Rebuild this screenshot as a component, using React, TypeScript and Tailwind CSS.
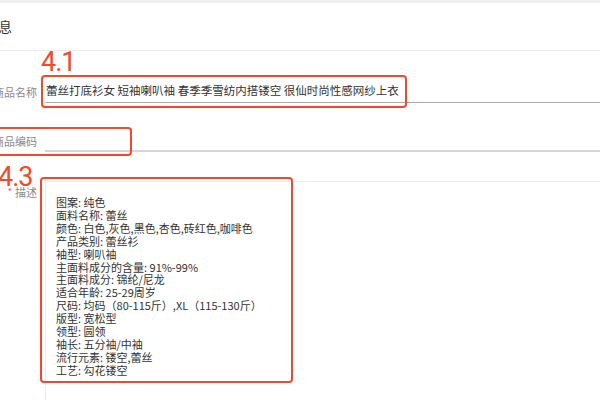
const descLines = [
  '图案: 纯色',
  '面料名称: 蕾丝',
  '颜色: 白色,灰色,黑色,杏色,砖红色,咖啡色',
  '产品类别: 蕾丝衫',
  '袖型: 喇叭袖',
  '主面料成分的含量: 91%-99%',
  '主面料成分: 锦纶/尼龙',
  '适合年龄: 25-29周岁',
  '尺码: 均码（80-115斤）,XL（115-130斤）',
  '版型: 宽松型',
  '领型: 圆领',
  '袖长: 五分袖/中袖',
  '流行元素: 镂空,蕾丝',
  '工艺: 勾花镂空',
];

function Label({ children, required }: { children: React.ReactNode; required?: boolean }) {
  return (
    <div className="w-[45px] shrink-0 flex justify-end pr-[8px]">
      <span className="shrink-0 whitespace-nowrap text-[11px] leading-[16px] text-[#8a8a8a]">
        {required && <span className="text-[#f0503c] text-[9px] align-top mr-[3px]">*</span>}
        {children}
      </span>
    </div>
  );
}

export default function App() {
  return (
    <div
      className="relative w-[600px] h-[400px] overflow-hidden bg-white"
      style={{ fontFamily: '"Noto Sans CJK SC", "Noto Sans", sans-serif' }}
    >
      <div className="h-[3px] bg-[#efefef]" />
      <div className="h-[48px] flex items-center border-b border-[#ececec]">
        <span className="ml-[-15px] text-[13.5px] text-[#333]">信息</span>
      </div>

      {/* 商品名称 */}
      <div className="flex items-end mt-[26px]">
        <div className="pb-[3px]">
          <Label>商品名称</Label>
        </div>
        <div className="flex-1 h-[26px] flex items-end pb-[3px] border-b border-[#aaa] pl-[1px]">
          <span className="whitespace-nowrap text-[11.5px] leading-[17px] text-[#333]">
            蕾丝打底衫女 短袖喇叭袖 春季季雪纺内搭镂空 很仙时尚性感网纱上衣
          </span>
        </div>
      </div>

      {/* 商品编码 */}
      <div className="flex items-end mt-[22px]">
        <div className="pb-[3px]">
          <Label>商品编码</Label>
        </div>
        <div className="flex-1 h-[27px] border-b-2 border-[#d6d6d6]" />
      </div>

      {/* 描述 */}
      <div className="flex mt-[29px]">
        <div className="pt-[3px]">
          <Label required>描述</Label>
        </div>
        <div className="flex-1 h-[240px] border-l border-t border-[#ececec] pl-[10px] pt-[14px]">
          {descLines.map((l) => (
            <div key={l} className="text-[11px] leading-[12.9px] text-[#333] whitespace-nowrap">
              {l}
            </div>
          ))}
        </div>
      </div>

      {/* annotations */}
      <div
        className="absolute left-[41px] top-[49px] text-[27px] leading-none text-[#f5472c] tracking-[-1px]"
        style={{ fontFamily: 'Roboto, sans-serif' }}
      >
        4.1
      </div>
      <div className="absolute left-[41px] top-[75px] w-[366px] h-[33px] border-2 border-[#f5472c] rounded-[4px]" />
      <div className="absolute left-[-4px] top-[127px] w-[136px] h-[29px] border-2 border-[#f5472c] rounded-[4px]" />
      <div
        className="absolute left-[-2px] top-[164px] text-[27px] leading-none text-[#f5472c] tracking-[-1px]"
        style={{ fontFamily: 'Roboto, sans-serif' }}
      >
        4.3
      </div>
      <div className="absolute left-[40px] top-[177px] w-[253px] h-[206px] border-2 border-[#f5472c] rounded-[4px]" />
    </div>
  );
}
